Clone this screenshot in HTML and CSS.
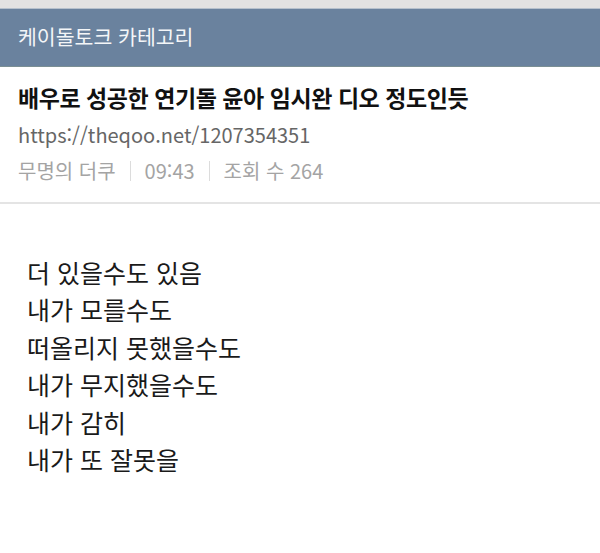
FILE: index.html
```html
<!DOCTYPE html>
<html lang="ko">
<head>
<meta charset="utf-8">
<link rel="stylesheet" href="styles.css">
</head>
<body>
<div class="topbar"></div>
<header class="cat-header">케이돌토크 카테고리</header>
<section class="post-head">
  <h1 class="title">배우로 성공한 연기돌 윤아 임시완 디오 정도인듯</h1>
  <div class="url">https://theqoo.net/1207354351</div>
  <div class="meta">
    <span>무명의 더쿠</span>
    <span class="sep"></span>
    <span>09:43</span>
    <span class="sep"></span>
    <span>조회 수 264</span>
  </div>
</section>
<article class="post-body">
  <p>더 있을수도 있음</p>
  <p>내가 모를수도</p>
  <p>떠올리지 못했을수도</p>
  <p>내가 무지했을수도</p>
  <p>내가 감히</p>
  <p>내가 또 잘못을</p>
</article>
</body>
</html>
```
FILE: styles.css
```css
html, body {
  margin: 0;
  padding: 0;
  background: #ffffff;
  font-family: "Noto Sans CJK KR", "Noto Sans", sans-serif;
  width: 600px;
  height: 553px;
  overflow: hidden;
}
.topbar {
  height: 8px;
  background: #e2e2e2;
  border-bottom: 1px solid #b5c0cc;
}
.cat-header {
  height: 57px;
  background: #6a829e;
  border-bottom: 1px solid #7b8f94;
  color: #f4f6f8;
  font-size: 20.5px;
  line-height: 55px;
  padding-left: 18px;
}
.post-head {
  padding: 13px 18px 0 18px;
  height: 122px;
  border-bottom: 2px solid #e4e4e4;
}
.title {
  margin: 0;
  font-size: 23px;
  font-weight: 700;
  color: #111;
  line-height: 34px;
  letter-spacing: -0.45px;
}
.url {
  margin-top: 7px;
  font-size: 20px;
  color: #666;
  line-height: 28px;
}
.meta {
  margin-top: 8px;
  font-size: 20px;
  color: #a4a4a4;
  line-height: 28px;
  display: flex;
  align-items: center;
  gap: 14px;
}
.sep {
  width: 1px;
  height: 20px;
  background: #dcdcdc;
}
.post-body {
  padding: 50px 27px 0 27px;
}
.post-body p {
  margin: 0;
  font-size: 25px;
  line-height: 37.4px;
  color: #1a1a1a;
}
```
